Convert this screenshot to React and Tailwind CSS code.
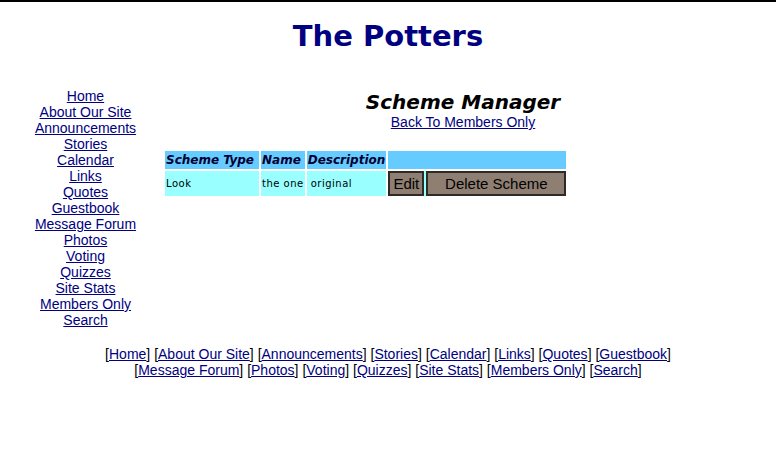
const navLinks = [
  "Home",
  "About Our Site",
  "Announcements",
  "Stories",
  "Calendar",
  "Links",
  "Quotes",
  "Guestbook",
  "Message Forum",
  "Photos",
  "Voting",
  "Quizzes",
  "Site Stats",
  "Members Only",
  "Search",
];

const footerRow1 = ["Home", "About Our Site", "Announcements", "Stories", "Calendar", "Links", "Quotes", "Guestbook"];
const footerRow2 = ["Message Forum", "Photos", "Voting", "Quizzes", "Site Stats", "Members Only", "Search"];

function FooterRow({ items }) {
  return (
    <div className="leading-4">
      {items.map((name, i) => (
        <span key={name}>
          {i > 0 && " "}[<a href="#" className="text-[#000080] underline">{name}</a>]
        </span>
      ))}
    </div>
  );
}

export default function App() {
  return (
    <div className="w-[776px] h-[457px] bg-white font-['Liberation_Sans',Arial,sans-serif] text-[14px] text-black overflow-hidden">
      {/* barra negra superior */}
      <div className="h-[2px] w-full bg-black" />

      <h1 className="mt-[18px] text-center font-['DejaVu_Sans',Verdana,sans-serif] font-bold text-[29px] leading-8 text-[#000080]">
        The Potters
      </h1>

      <div className="mt-[36px] flex">
        {/* menú lateral */}
        <nav className="w-[163px] pl-[8px] flex flex-col items-center leading-4">
          {navLinks.map((name) => (
            <a key={name} href="#" className="text-[#000080] underline">
              {name}
            </a>
          ))}
        </nav>

        {/* contenido */}
        <div className="w-[600px]">
          <div className="text-center pt-[2px]">
            <h2 className="font-['DejaVu_Sans',Verdana,sans-serif] font-bold italic text-[20px] leading-6">
              Scheme Manager
            </h2>
            <a href="#" className="text-[#000080] underline leading-4 block">
              Back To Members Only
            </a>
          </div>

          <table className="mt-[19px] border-separate border-spacing-[2px] font-['DejaVu_Sans',Verdana,sans-serif]">
            <thead>
              <tr className="bg-[#66ccff] text-[#000033] text-[12px] font-bold italic">
                <th className="text-left px-[1px] h-[18px] leading-4">Scheme Type</th>
                <th className="text-left px-[1px] leading-4">Name</th>
                <th className="text-left px-[1px] leading-4">Description</th>
                <th className="w-[178px]"></th>
              </tr>
            </thead>
            <tbody>
              <tr className="bg-[#99ffff] text-[10px] tracking-[0.5px]">
                <td className="px-[1px] w-[94px]">Look</td>
                <td className="px-[1px]">the one</td>
                <td className="px-[4px]">original</td>
                <td className="p-0">
                  <div className="flex gap-[2px] tracking-normal">
                    <button className="h-[25px] w-[36px] bg-[#8f7f73] border-2 border-[#2e2a28] font-['Liberation_Sans',Arial,sans-serif] text-[15px]">
                      Edit
                    </button>
                    <button className="h-[25px] flex-1 bg-[#8f7f73] border-2 border-[#2e2a28] font-['Liberation_Sans',Arial,sans-serif] text-[15px]">
                      Delete Scheme
                    </button>
                  </div>
                </td>
              </tr>
            </tbody>
          </table>
        </div>
      </div>

      <footer className="mt-[18px] text-center">
        <FooterRow items={footerRow1} />
        <FooterRow items={footerRow2} />
      </footer>
    </div>
  );
}
